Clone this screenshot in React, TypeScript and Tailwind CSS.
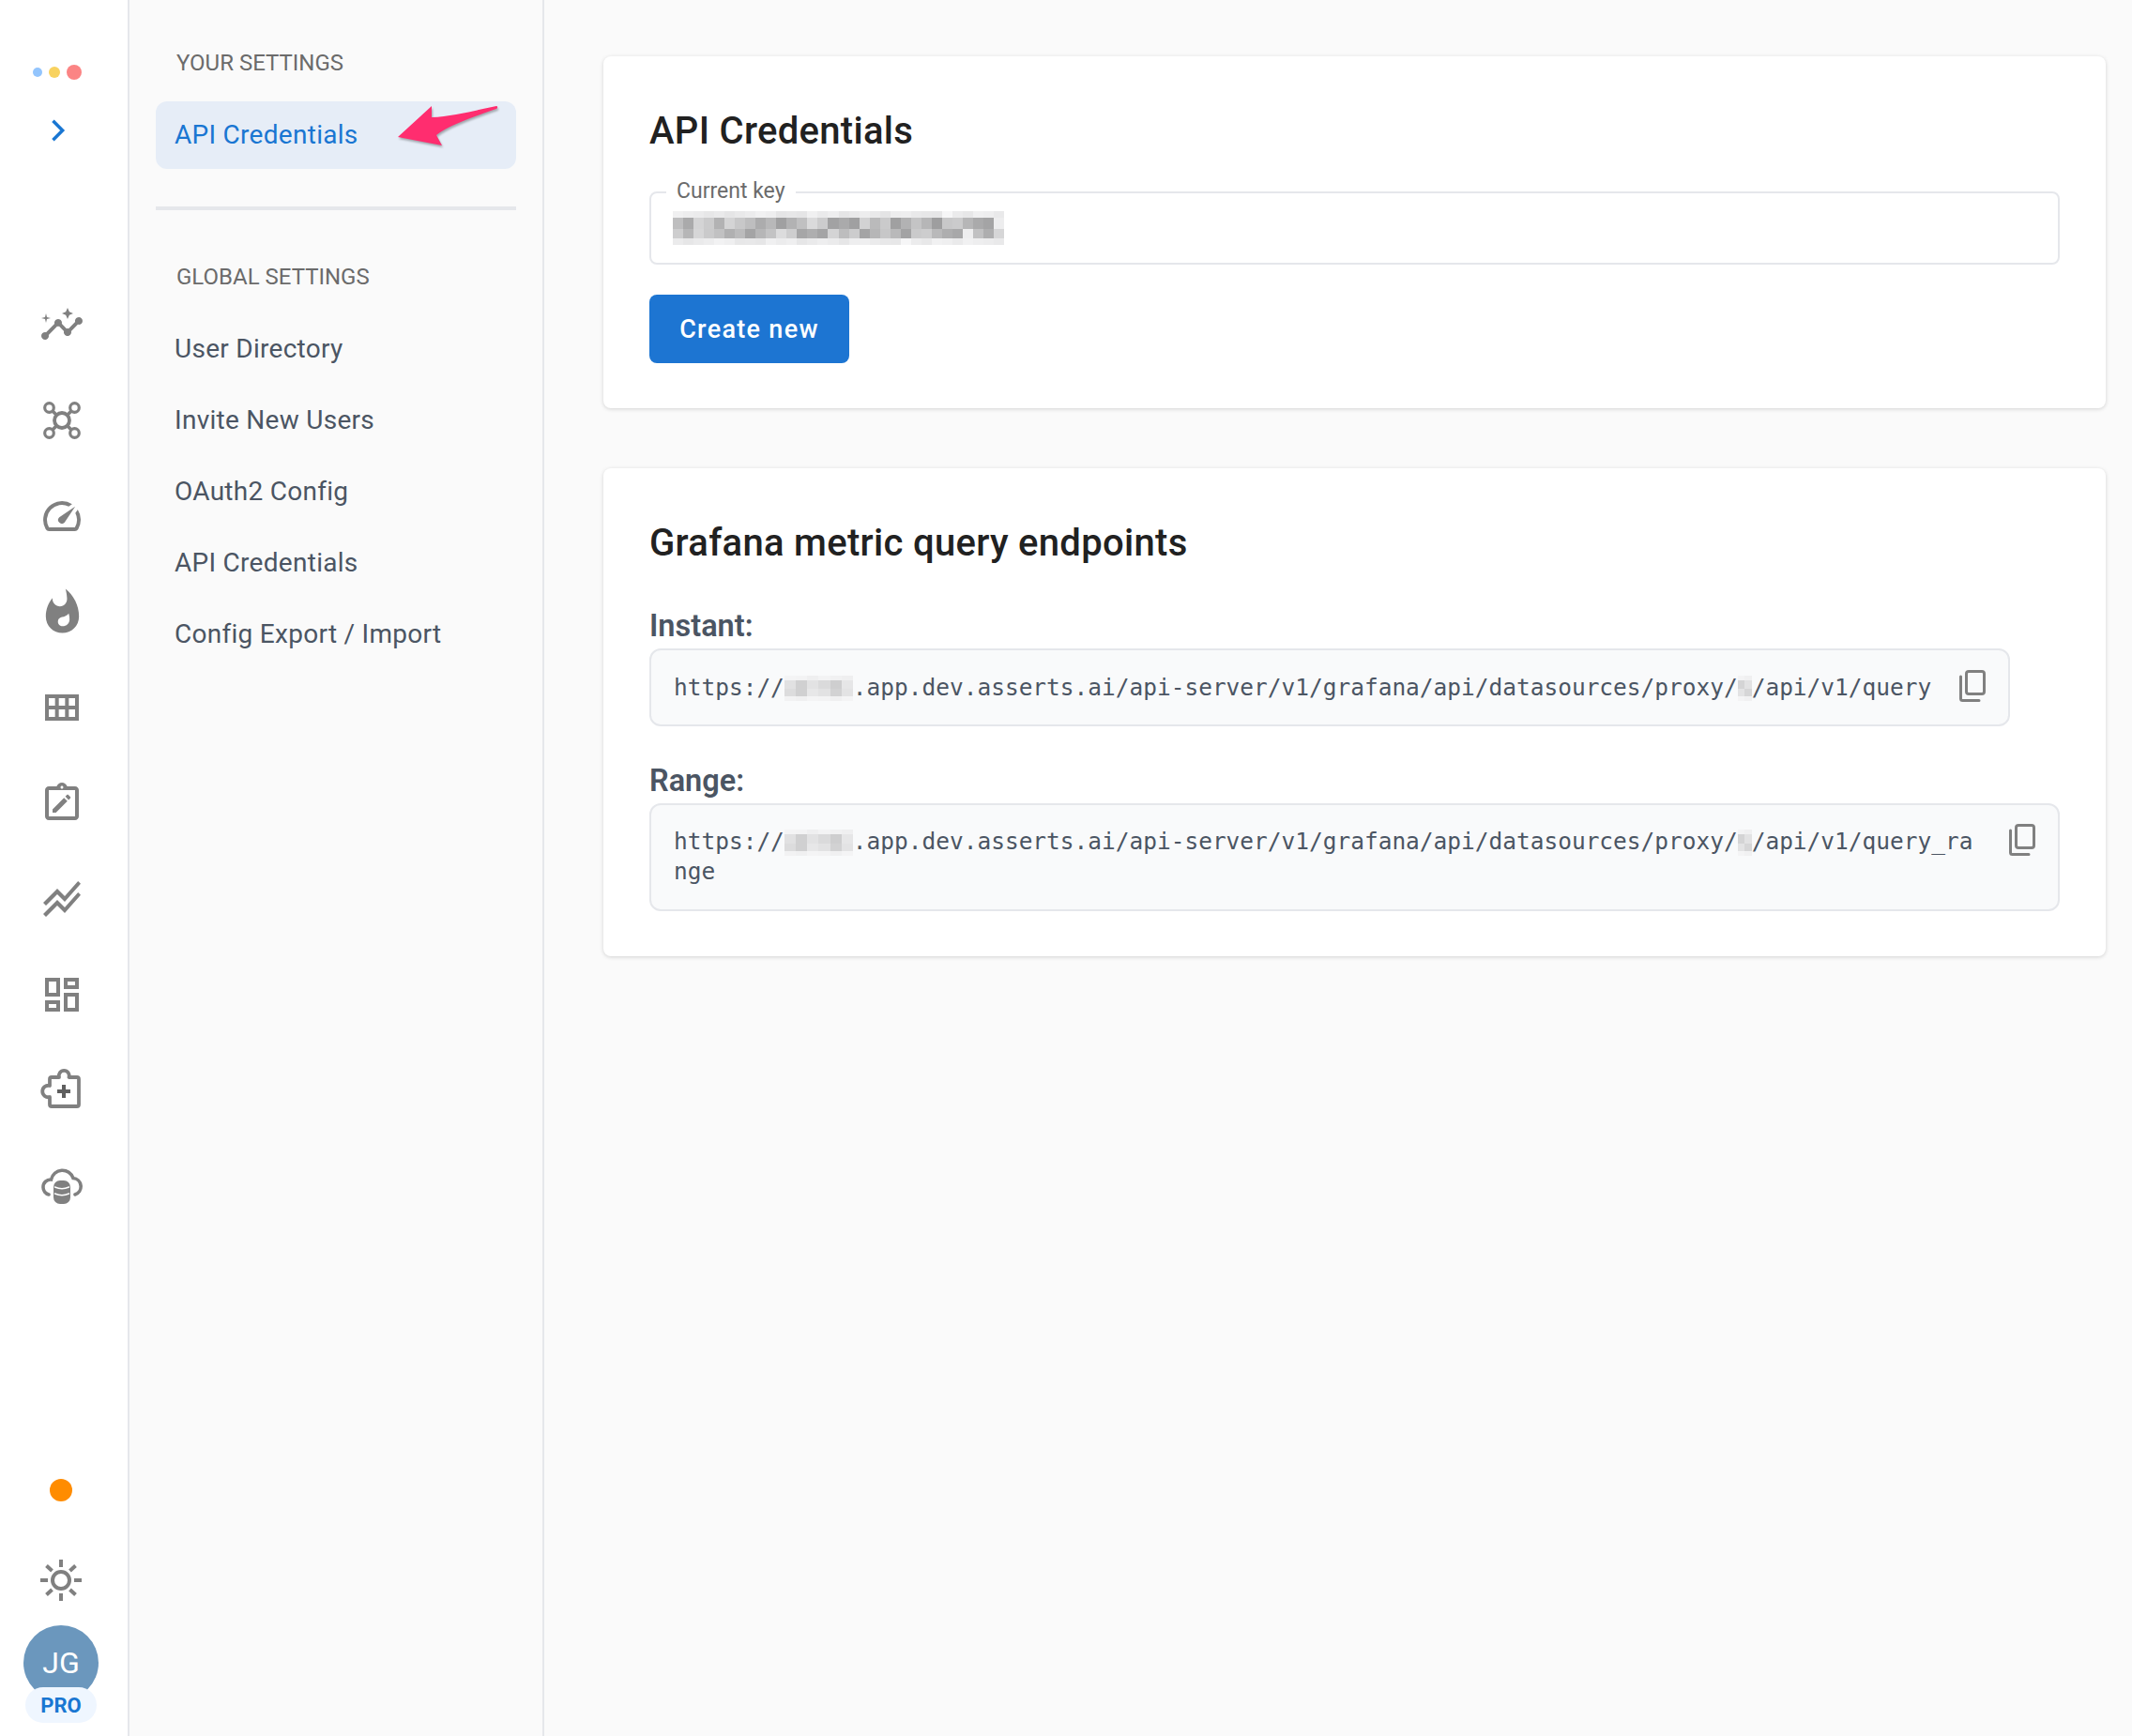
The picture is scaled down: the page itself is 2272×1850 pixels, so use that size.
import React from "react";
import { MdInsights, MdSpeed, MdOutlineViewModule, MdOutlineStackedLineChart, MdOutlineDashboard } from "react-icons/md";

const roboto = "font-['Roboto','Liberation_Sans',sans-serif]";

function HubIcon() {
  return (
    <svg viewBox="0 0 48 48" width="48" height="48" fill="none" stroke="#808080">
      <path d="M11 11L37 37M37 11L11 37" strokeWidth="3.600" />
      <circle cx="24" cy="24" r="8" strokeWidth="3.800" fill="#ffffff" />
      <circle cx="10.500" cy="10.500" r="4.800" strokeWidth="3.200" fill="#ffffff" />
      <circle cx="37.500" cy="10.500" r="4.800" strokeWidth="3.200" fill="#ffffff" />
      <circle cx="10.500" cy="37.500" r="4.800" strokeWidth="3.200" fill="#ffffff" />
      <circle cx="37.500" cy="37.500" r="4.800" strokeWidth="3.200" fill="#ffffff" />
    </svg>
  );
}

function FlameIcon() {
  return (
    <svg viewBox="0 0 24 24" width="53" height="53" className="shrink-0" fill="#808080">
      <path d="M13.500.67s.74 2.650.74 4.800c0 2.060-1.350 3.730-3.410 3.730-2.070 0-3.630-1.670-3.630-3.730l.03-.36C5.210 7.510 4 10.620 4 14c0 4.420 3.580 8 8 8s8-3.580 8-8C20 8.610 17.410 3.800 13.500.67z" />
      <path
        d="M11.710 19c-1.780 0-3.220-1.400-3.220-3.140 0-1.620 1.050-2.760 2.810-3.120 1.770-.36 3.600-1.210 4.620-2.580.39 1.290.59 2.650.59 4.040 0 2.650-2.150 4.800-4.800 4.800z"
        fill="#ffffff"
        transform="translate(3.900 5.400) scale(0.7)"
      />
    </svg>
  );
}

function ClipboardEdit() {
  return (
    <svg viewBox="0 0 24 24" width="48" height="48" fill="#808080">
      <path d="M19 3h-4.180C14.400 1.840 13.300 1 12 1s-2.400.84-2.820 2H5c-1.100 0-2 .9-2 2v14c0 1.100.9 2 2 2h14c1.100 0 2-.9 2-2V5c0-1.100-.9-2-2-2zm-7-.25c.41 0 .75.34.75.75s-.34.75-.75.75-.75-.34-.75-.75.34-.75.75-.75zM19 19H5V5h14v14z" />
      <path d="M7 17h1.800l6.100-6.100-1.800-1.800L7 15.200V17zm8.600-6.800.9-.9c.2-.2.2-.5 0-.7l-1.100-1.100c-.2-.2-.5-.2-.7 0l-.9.9 1.800 1.800z" />
    </svg>
  );
}

function PuzzlePlus() {
  return (
    <svg viewBox="0 0 48 48" width="48" height="48" fill="none" stroke="#808080" strokeWidth="3.800" strokeLinejoin="round">
      <path d="M11 12a2 2 0 0 1 2-2h8a5.500 5.500 0 1 1 10.500 0H40a2 2 0 0 1 2 2v27a2 2 0 0 1-2 2H13a2 2 0 0 1-2-2v-8a6.200 6.200 0 1 1 0-12z" />
      <path d="M26 18v14M19 25h14" stroke="#5f5f5f" strokeWidth="4" />
    </svg>
  );
}

function CloudDb() {
  return (
    <svg viewBox="0 0 48 48" width="48" height="48" fill="none" stroke="#808080" strokeWidth="3.600" strokeLinecap="round">
      <path d="M10 33A8 8 0 0 1 4 25a8 8 0 0 1 8.500-8A12.200 12.200 0 0 1 36 15.500 9 9 0 0 1 38 33" />
      <rect x="15" y="18" width="18" height="25" rx="7" fill="#808080" stroke="none" />
      <path d="M16.500 25q7.500 3.500 15 0M16.500 32q7.500 3.500 15 0" stroke="#ffffff" strokeWidth="1.500" />
    </svg>
  );
}

function SunIcon() {
  return (
    <svg viewBox="0 0 44 44" width="44" height="44" fill="none" stroke="#808080" strokeWidth="4">
      <circle cx="22" cy="22" r="9" />
      <path d="M22 0v8M22 36v8M0 22h8M36 22h8M6.500 6.500l6 5.500M31.500 32l6 5.500M37.500 6.500l-6 5.500M12.500 32l-6 5.500" />
    </svg>
  );
}

function CopyIcon() {
  return (
    <svg viewBox="0 0 28 34" width="28" height="34" fill="none" stroke="#808080" strokeWidth="3">
      <rect x="7.500" y="1.500" width="19" height="24" rx="2.500" />
      <path d="M1.500 7v23.500a2 2 0 0 0 2 2H21" strokeLinecap="round" />
    </svg>
  );
}

const railIcons = [
  <MdInsights size={48} color="#808080" />,
  <HubIcon />,
  <MdSpeed size={48} color="#808080" />,
  <FlameIcon />,
  <MdOutlineViewModule size={48} color="#808080" />,
  <ClipboardEdit />,
  <MdOutlineStackedLineChart size={48} color="#808080" />,
  <MdOutlineDashboard size={48} color="#808080" />,
  <PuzzlePlus />,
  <CloudDb />,
];

const KEY = [190, 170, 212, 203, 178, 212, 200, 190, 172, 184, 160, 178, 192, 218, 204, 162, 170, 160, 210, 186, 202, 160, 178, 196, 182, 158, 200, 203, 182, 170, 164, 237];
const HOST = [225, 208, 226, 218, 206, 230];
const ID = [212, 226];

function cell(base: number[], mix: number, shift: number, i: number) {
  const g = base[(i + shift) % base.length];
  const v = Math.round(g + (248 - g) * mix);
  return `rgb(${v},${v},${v + 1})`;
}

const ROWS = [
  { h: 0.19, mix: 0.78, shift: 5 },
  { h: 0.33, mix: 0, shift: 0 },
  { h: 0.29, mix: 0.05, shift: 3 },
  { h: 0.19, mix: 0.8, shift: 9 },
];

function Blur({ className, base }: { className: string; base: number[] }) {
  return (
    <span className={`inline-flex flex-col align-middle ${className}`}>
      {ROWS.map((r, ri) => (
        <span key={ri} className="flex w-full" style={{ height: `${r.h * 100}%` }}>
          {base.map((_, i) => (
            <span key={i} className="flex-1 h-full" style={{ backgroundColor: cell(base, r.mix, r.shift, i) }} />
          ))}
        </span>
      ))}
    </span>
  );
}

function Endpoint({ label, tail, full }: { label: string; tail: string; full?: boolean }) {
  return (
    <div>
      <div className="text-[32.500px] leading-[36px] font-semibold text-[#4b5563] mb-[6px]">{label}</div>
      <div className={`flex items-start bg-[#f9fafb] border-2 border-[#e5e7eb] rounded-xl pl-[24px] pr-[24px] py-[23.500px] ${full ? "" : "w-[1450px]"}`}>
        <div className="font-['DejaVu_Sans_Mono',monospace] text-[24.480px] leading-[32px] text-[#4b5563] break-all flex-1 min-w-0">
          https://<Blur className="w-[73px] h-[28px]" base={HOST} />.app.dev.asserts.ai/api-server/v1/grafana/api/datasources/proxy/<Blur className="w-[15px] h-[28px]" base={ID} />/api/v1/{tail}
        </div>
        <div className="ml-[24px] -mt-[3px] shrink-0">
          <CopyIcon />
        </div>
      </div>
    </div>
  );
}

export default function App() {
  return (
    <div className={`${roboto} flex w-[2272px] h-[1850px] bg-[#fafafa] overflow-hidden`}>
      <aside className="w-[138px] shrink-0 bg-white border-r-2 border-[#e5e7eb] flex flex-col items-center">
        <div className="flex items-center gap-[7px] mt-[69px] -ml-[14px] h-[16px]">
          <span className="w-[10px] h-[10px] rounded-full bg-[#93c5fd]" />
          <span className="w-[12px] h-[12px] rounded-full bg-[#f8d25f]" />
          <span className="w-[16px] h-[16px] rounded-full bg-[#fb8484]" />
        </div>
        <svg viewBox="0 0 16 26" width="16" height="24" className="mt-[42px] -ml-[13px]" fill="none" stroke="#1976d2" strokeWidth="3.800">
          <path d="M2 2l11 11L2 24" />
        </svg>
        <div className="flex flex-col gap-[54px] mt-[171px] -ml-[4px]">
          {railIcons.map((ic, i) => (
            <div key={i} className="w-[48px] h-[48px] flex items-center justify-center">{ic}</div>
          ))}
        </div>
        <div className="mt-auto flex flex-col items-center -ml-[6px]">
          <span className="w-[24px] h-[24px] rounded-full bg-[#ff8c00]" />
          <div className="mt-[62px]"><SunIcon /></div>
          <div className="relative mt-[26px] mb-[22px] w-[80px] h-[96px]">
            <div className="w-[80px] h-[80px] rounded-full bg-[#6b97bd] text-white text-[32px] flex items-center justify-center">JG</div>
            <div className="absolute left-[2px] top-[66px] w-[76px] h-[38px] rounded-full bg-[#eff6ff] text-[#1976d2] text-[22px] font-bold flex items-center justify-center">PRO</div>
          </div>
        </div>
      </aside>

      <nav className="w-[442px] shrink-0 bg-[#fafafa] border-r-2 border-[#e5e7eb] px-[28px] pt-[53px]">
        <div className="text-[24px] leading-[28px] text-[#6b6b6b] pl-[22px]">YOUR SETTINGS</div>
        <div className="relative mt-[27px] h-[72px] rounded-xl bg-[#e6edf7] text-[#1976d2] text-[28px] tracking-[0.28px] leading-[72px] pl-[20px]">
          API Credentials
          <svg className="absolute left-[250px] top-0 drop-shadow-[1px_2px_1px_rgba(0,0,0,0.3)]" width="120" height="56" viewBox="0 0 120 56">
            <path d="M8 38L44 5v12c22-1 45-7 69-12 1.500 0 1.500 2.500 0 3-20 7-50 17-64 28l6 11z" fill="#ff2d6f" />
          </svg>
        </div>
        <div className="h-[4px] bg-[#e5e7eb] mt-[40px]" />
        <div className="text-[24px] leading-[28px] text-[#6b6b6b] pl-[22px] mt-[57px]">GLOBAL SETTINGS</div>
        <ul className="mt-[25px] text-[28px] tracking-[0.28px] text-[#4b5563]">
          {["User Directory", "Invite New Users", "OAuth2 Config", "API Credentials", "Config Export / Import"].map((t) => (
            <li key={t} className="h-[76px] leading-[76px] pl-[20px]">{t}</li>
          ))}
        </ul>
      </nav>

      <main className="flex-1 min-w-0 pl-[63px] pr-[28px] pt-[60px] flex flex-col gap-[64px]">
        <section className="bg-white rounded-lg shadow-[0_1px_4px_rgba(0,0,0,0.16)] px-[49px] pt-[56px] pb-[48px]">
          <h2 className="text-[40px] leading-[48px] font-medium tracking-[0.3px] text-[#212121]">API Credentials</h2>
          <div className="relative mt-[40px] h-[78px] border-2 border-[#e5e7eb] rounded-lg flex items-center pl-[23px]">
            <span className="absolute left-[16px] -top-[15px] bg-white px-[11px] text-[23px] leading-[26px] text-[#6b6b6b]">Current key</span>
            <Blur className="w-[353px] h-[36px]" base={KEY} />
          </div>
          <button className="block mt-[32px] h-[73px] w-[213px] pt-[2px] rounded-lg bg-[#1d75d2] text-white text-[27px] font-medium tracking-[1.3px]">Create new</button>
        </section>

        <section className="bg-white rounded-lg shadow-[0_1px_4px_rgba(0,0,0,0.16)] px-[49px] pt-[56px] pb-[48px]">
          <h2 className="text-[40px] leading-[48px] font-medium tracking-[0.3px] text-[#212121]">Grafana metric query endpoints</h2>
          <div className="mt-[46px] flex flex-col gap-[39.500px]">
            <Endpoint label="Instant:" tail="query" />
            <Endpoint label="Range:" tail="query_range" full />
          </div>
        </section>
      </main>
    </div>
  );
}
